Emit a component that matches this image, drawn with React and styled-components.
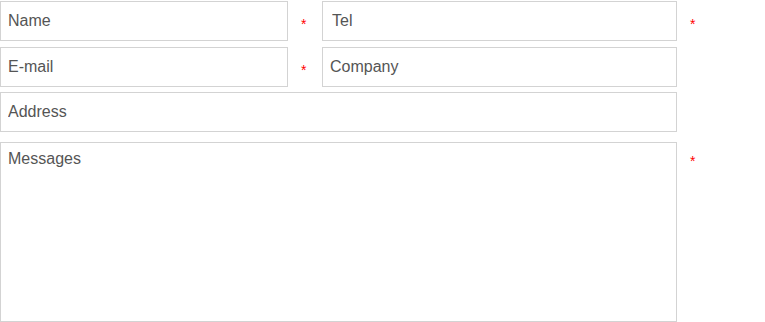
import React from "react";
import styled, { createGlobalStyle } from "styled-components";

const GlobalStyle = createGlobalStyle`
  html, body {
    margin: 0;
    padding: 0;
    background: #ffffff;
  }
  body {
    font-family: "Liberation Sans", Arial, sans-serif;
  }
`;

const Form = styled.form`
  display: flex;
  flex-direction: column;
  padding-top: 1px;
  width: 765px;
`;

const Row = styled.div`
  display: flex;
  align-items: flex-start;
  margin-top: ${(p) => p.$mt || 0}px;
`;

const fieldBase = `
  box-sizing: border-box;
  border: 1px solid #d3d3d3;
  border-radius: 0;
  background: #fff;
  margin: 0;
  font-family: "Liberation Sans", Arial, sans-serif;
  font-size: 16px;
  color: #555;
  outline: none;
  &::placeholder {
    color: #555;
    opacity: 1;
  }
`;

const Input = styled.input`
  ${fieldBase}
  width: ${(p) => p.$w}px;
  height: 40px;
  padding: 0 7px 0 ${(p) => p.$pl || 7}px;
`;

const TextArea = styled.textarea`
  ${fieldBase}
  width: 677px;
  height: 180px;
  padding: 7px 7px;
  resize: none;
  display: block;
  line-height: normal;
`;

const Star = styled.span`
  box-sizing: border-box;
  width: ${(p) => p.$w || 34}px;
  padding-left: ${(p) => p.$ml || 13}px;
  padding-top: ${(p) => p.$pt || 15}px;
  color: #ff0000;
  font-size: 14px;
  line-height: 16px;
  font-family: "Liberation Sans", Arial, sans-serif;
`;

export default function App() {
  return (
    <>
      <GlobalStyle />
      <Form onSubmit={(e) => e.preventDefault()}>
        <Row>
          <Input $w={288} placeholder="Name" />
          <Star>*</Star>
          <Input $w={355} $pl={9} placeholder="Tel" />
          <Star $w={40} $ml={13}>*</Star>
        </Row>
        <Row $mt={6}>
          <Input $w={288} placeholder="E-mail" />
          <Star>*</Star>
          <Input $w={355} placeholder="Company" />
        </Row>
        <Row $mt={5}>
          <Input $w={677} placeholder="Address" />
        </Row>
        <Row $mt={10}>
          <TextArea placeholder="Messages" />
          <Star $w={40} $ml={13} $pt={11}>*</Star>
        </Row>
      </Form>
    </>
  );
}
